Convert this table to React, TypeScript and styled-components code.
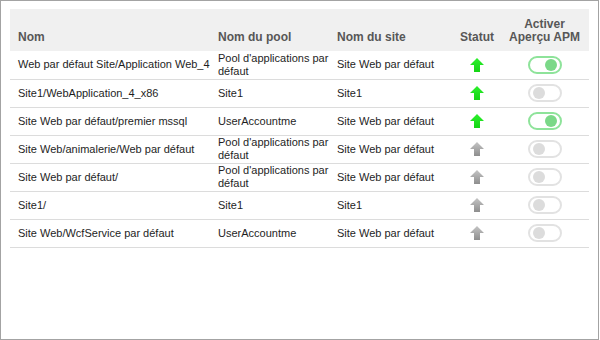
import React from "react";
import styled, { createGlobalStyle } from "styled-components";

const GlobalStyle = createGlobalStyle`
  html, body {
    margin: 0;
    padding: 0;
    background: #ffffff;
  }
  body {
    font-family: "Liberation Sans", Arial, Helvetica, sans-serif;
  }
`;

type Row = {
  name: string;
  pool: string;
  site: string;
  up: boolean;
  apm: boolean;
};

const rows: Row[] = [
  { name: "Web par défaut Site/Application Web_4", pool: "Pool d'applications par défaut", site: "Site Web par défaut", up: true, apm: true },
  { name: "Site1/WebApplication_4_x86", pool: "Site1", site: "Site1", up: true, apm: false },
  { name: "Site Web par défaut/premier mssql", pool: "UserAccountme", site: "Site Web par défaut", up: true, apm: true },
  { name: "Site Web/animalerie/Web par défaut", pool: "Pool d'applications par défaut", site: "Site Web par défaut", up: false, apm: false },
  { name: "Site Web par défaut/", pool: "Pool d'applications par défaut", site: "Site Web par défaut", up: false, apm: false },
  { name: "Site1/", pool: "Site1", site: "Site1", up: false, apm: false },
  { name: "Site Web/WcfService par défaut", pool: "UserAccountme", site: "Site Web par défaut", up: false, apm: false },
];

const StatusArrow = ({ up, id }: { up: boolean; id: string }) => (
  <svg width="14" height="14" viewBox="0 0 14 14">
    <defs>
      <linearGradient id={id} x1="0" y1="0" x2="0" y2="1">
        {up ? (
          <>
            <stop offset="0" stopColor="#2cf02c" />
            <stop offset="1" stopColor="#14d414" />
          </>
        ) : (
          <>
            <stop offset="0" stopColor="#c4c4c4" />
            <stop offset="1" stopColor="#8e8e8e" />
          </>
        )}
      </linearGradient>
    </defs>
    <polygon points="7,0 14,7 10,7 10,14 4,14 4,7 0,7" fill={`url(#${id})`} />
  </svg>
);

const App = () => {
  return (
    <>
      <GlobalStyle />
      <Frame>
        <Table>
          <colgroup>
            <col style={{ width: 200 }} />
            <col style={{ width: 119 }} />
            <col style={{ width: 122 }} />
            <col style={{ width: 52 }} />
            <col style={{ width: 86 }} />
          </colgroup>
          <thead>
            <HeadRow>
              <HeadCell>Nom</HeadCell>
              <HeadCell>Nom du pool</HeadCell>
              <HeadCell>Nom du site</HeadCell>
              <HeadCell $center>Statut</HeadCell>
              <HeadCell $center $last>
                Activer
                <br />
                Aperçu APM
              </HeadCell>
            </HeadRow>
          </thead>
          <tbody>
            {rows.map((r, i) => (
              <BodyRow key={i}>
                <Cell $nowrap>{r.name}</Cell>
                <Cell>{r.pool}</Cell>
                <Cell>{r.site}</Cell>
                <Cell $center>
                  <IconBox>
                    <StatusArrow up={r.up} id={`arrow-${i}`} />
                  </IconBox>
                </Cell>
                <Cell $center $last>
                  <Toggle $on={r.apm}>
                    <Knob $on={r.apm} />
                  </Toggle>
                </Cell>
              </BodyRow>
            ))}
          </tbody>
        </Table>
      </Frame>
    </>
  );
};

export default App;

const Frame = styled.div`
  box-sizing: border-box;
  width: 599px;
  height: 340px;
  border: 1px solid #a3a3a3;
  padding: 8px 0 0 9px;
  background: #ffffff;
`;

const Table = styled.table`
  width: 579px;
  table-layout: fixed;
  border-collapse: collapse;
  border-spacing: 0;
`;

const HeadRow = styled.tr`
  height: 42px;
  background: #f0f0f0;
`;

const HeadCell = styled.th<{ $center?: boolean; $last?: boolean }>`
  vertical-align: bottom;
  text-align: ${(p) => (p.$center ? "center" : "left")};
  padding: 0 ${(p) => (p.$last ? "3px" : "0")} 7px ${(p) => (p.$center ? "0" : "8px")};
  font-size: 12px;
  line-height: 13px;
  font-weight: bold;
  color: #575757;
`;

const BodyRow = styled.tr`
  height: 28px;
  border-bottom: 1px solid #dcdcdc;
`;

const Cell = styled.td<{ $center?: boolean; $last?: boolean; $nowrap?: boolean }>`
  vertical-align: middle;
  text-align: ${(p) => (p.$center ? "center" : "left")};
  padding: 0 ${(p) => (p.$last ? "3px" : "0")} 0 ${(p) => (p.$center ? "0" : "8px")};
  font-size: 11px;
  line-height: 13px;
  color: #1e1e1e;
  white-space: ${(p) => (p.$nowrap ? "nowrap" : "normal")};
`;

const IconBox = styled.span`
  display: inline-flex;
  vertical-align: middle;
`;

const Toggle = styled.span<{ $on: boolean }>`
  box-sizing: border-box;
  display: inline-flex;
  align-items: center;
  justify-content: ${(p) => (p.$on ? "flex-end" : "flex-start")};
  vertical-align: middle;
  width: 34px;
  height: 18px;
  padding: 0 3px;
  border-radius: 9px;
  border: 2px solid ${(p) => (p.$on ? "#8ee39a" : "#e2e2e2")};
  background: #ffffff;
`;

const Knob = styled.span<{ $on: boolean }>`
  width: 12px;
  height: 12px;
  border-radius: 50%;
  background: ${(p) => (p.$on ? "#7bd888" : "#dcdcdc")};
`;
